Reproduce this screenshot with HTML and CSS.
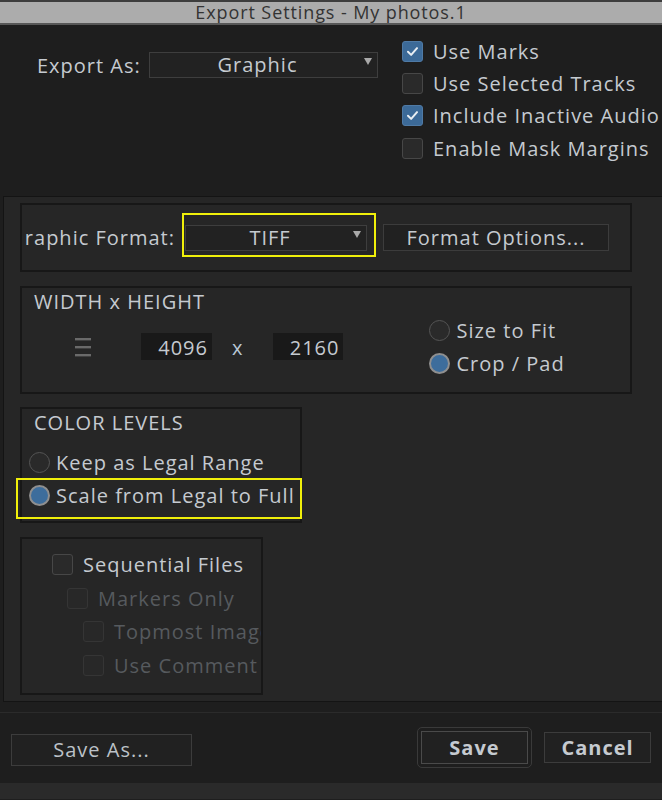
FILE: index.html
```html
<!DOCTYPE html>
<html lang="en">
<head>
<meta charset="utf-8">
<title>Export Settings</title>
<link rel="stylesheet" href="styles.css">
</head>
<body>
<div class="window">
  <header class="titlebar">Export Settings - My photos.1</header>

  <section class="top">
    <div class="export-as">
      <span class="label">Export As:</span>
      <div class="dropdown dd-export"><span>Graphic</span><span class="arrow"></span></div>
    </div>
    <ul class="checks">
      <li><span class="cb checked"><svg viewBox="0 0 21 21"><path d="M5.5 10.8 L9 14.2 L15.5 6.8" /></svg></span>Use Marks</li>
      <li><span class="cb"></span>Use Selected Tracks</li>
      <li><span class="cb checked"><svg viewBox="0 0 21 21"><path d="M5.5 10.8 L9 14.2 L15.5 6.8" /></svg></span>Include Inactive Audio</li>
      <li><span class="cb"></span>Enable Mask Margins</li>
    </ul>
  </section>

  <section class="panel">
    <div class="box format-box">
      <div class="format-label"><span>Graphic Format:</span></div>
      <div class="dropdown dd-format"><span>TIFF</span><span class="arrow"></span></div>
      <div class="btn btn-options">Format Options...</div>
      <div class="highlight hl-format"></div>
    </div>

    <div class="box size-box">
      <div class="box-title">WIDTH x HEIGHT</div>
      <div class="size-row">
        <div class="dims">
          <svg class="link-icon" viewBox="0 0 16 27"><rect x="0" y="5" width="16" height="2.4"/><rect x="0" y="13" width="16" height="2.4"/><rect x="0" y="21" width="16" height="2.4"/></svg>
          <span class="field field-w">4096</span>
          <span class="times">x</span>
          <span class="field field-h">2160</span>
        </div>
        <div class="radios size-radios">
          <div class="radio-row"><span class="radio"></span>Size to Fit</div>
          <div class="radio-row"><span class="radio on"></span>Crop / Pad</div>
        </div>
      </div>
    </div>

    <div class="box levels-box">
      <div class="box-title">COLOR LEVELS</div>
      <div class="radios levels-radios">
        <div class="radio-row"><span class="radio"></span>Keep as Legal Range</div>
        <div class="radio-row"><span class="radio on"></span>Scale from Legal to Full</div>
      </div>
      <div class="highlight hl-levels"></div>
    </div>

    <div class="box seq-box">
      <div class="seq-row lvl0"><span class="cb"></span>Sequential Files</div>
      <div class="seq-row lvl1 disabled"><span class="cb"></span>Markers Only</div>
      <div class="seq-row lvl2 disabled"><span class="cb"></span>Topmost Image</div>
      <div class="seq-row lvl2 disabled"><span class="cb"></span>Use Comment</div>
    </div>
  </section>

  <footer class="footer">
    <div class="btn btn-saveas">Save As...</div>
    <div class="default-ring"><div class="btn btn-save">Save</div></div>
    <div class="btn btn-cancel">Cancel</div>
  </footer>
  <div class="statusbar"></div>
</div>
</body>
</html>
```
FILE: styles.css
```css
html, body {
  margin: 0;
  padding: 0;
  background: #1e1e1e;
}

body {
  font-family: "Open Sans", "DejaVu Sans", sans-serif;
  color: #c5cad0;
  font-size: 20px;
  letter-spacing: 1px;
}

.window {
  width: 662px;
  height: 800px;
  overflow: hidden;
  display: flex;
  flex-direction: column;
}

/* title bar */
.titlebar {
  height: 21px;
  border-top: 2px solid #3d3d3d;
  border-bottom: 2px solid #575757;
  background: #acacac;
  color: #333333;
  font-size: 18px;
  font-weight: 500;
  line-height: 21px;
  text-align: center;
  white-space: nowrap;
  letter-spacing: 0.9px;
}

/* top options */
.top {
  height: 171px;
  display: flex;
  padding-left: 37px;
  box-sizing: border-box;
  flex-shrink: 0;
}

.export-as {
  display: flex;
  align-items: center;
  gap: 10px;
  margin-top: 27px;
  height: 26px;
}

.label {
  width: 102px;
  white-space: nowrap;
}

.dropdown {
  position: relative;
  height: 26px;
  box-sizing: border-box;
  border: 1px solid #3e3e3e;
  background: #222222;
  display: flex;
  align-items: center;
  justify-content: center;
  padding-right: 12px;
  line-height: 1;
  white-space: nowrap;
}

.dropdown .arrow {
  position: absolute;
  right: 5px;
  top: 5px;
  width: 0;
  height: 0;
  border-left: 4px solid transparent;
  border-right: 4px solid transparent;
  border-top: 7px solid #a9a9a9;
}

.dd-export {
  width: 229px;
}

.checks {
  list-style: none;
  margin: 10px 0 0 24px;
  padding: 0;
}

.checks li {
  display: flex;
  align-items: center;
  gap: 10px;
  height: 32.3px;
  white-space: nowrap;
}

/* checkboxes */
.cb {
  flex: 0 0 auto;
  width: 21px;
  height: 21px;
  box-sizing: border-box;
  border: 1px solid #474747;
  border-radius: 3px;
  background: #2a2a2a;
  display: inline-flex;
}

.cb.checked {
  background: #3c6a98;
  border-color: #4f7aa5;
}

.cb svg {
  width: 19px;
  height: 19px;
}

.cb svg path {
  fill: none;
  stroke: #e9eef3;
  stroke-width: 2.2;
  stroke-linecap: round;
  stroke-linejoin: round;
}

/* settings panel */
.panel {
  margin-left: 3px;
  border: 1px solid #141414;
  border-right: 0;
  background: #262626;
  padding: 6px 0 6px 16px;
  display: flex;
  flex-direction: column;
  align-items: flex-start;
  flex-shrink: 0;
}

.box {
  box-sizing: border-box;
  border: 2px solid #171717;
  background: #262626;
  position: relative;
}

.box-title {
  font-size: 20px;
  line-height: 24px;
  padding-top: 2px;
  white-space: nowrap;
}

.highlight {
  position: absolute;
  box-sizing: border-box;
  border: 2px solid #f0ef0a;
  pointer-events: none;
}

/* graphic format */
.format-box {
  width: 612px;
  height: 69px;
  display: flex;
  align-items: center;
  padding-left: 3px;
}

.format-label {
  width: 150px;
  overflow: hidden;
  display: flex;
  justify-content: flex-end;
  white-space: nowrap;
  margin-right: 10px;
}

.dd-format {
  width: 182px;
  margin-right: 16px;
}

.btn {
  box-sizing: border-box;
  border: 1px solid #3c3c3c;
  background: #212121;
  display: flex;
  align-items: center;
  justify-content: center;
  white-space: nowrap;
  line-height: 1;
}

.btn-options {
  width: 226px;
  height: 27px;
}

.hl-format {
  left: 160px;
  top: 8px;
  width: 194px;
  height: 44px;
}

/* width x height */
.size-box {
  margin-top: 14px;
  width: 612px;
  height: 108px;
  padding-left: 12px;
}

.size-row {
  display: flex;
  align-items: flex-start;
}

.dims {
  display: flex;
  align-items: center;
  margin-top: 17px;
  margin-left: 41px;
}

.link-icon {
  width: 16px;
  height: 27px;
  fill: #6a6a6a;
}

.field {
  height: 27px;
  box-sizing: border-box;
  background: #191919;
  display: flex;
  align-items: center;
  justify-content: flex-end;
  padding: 4px 4px 0 0;
  line-height: 1;
}

.field-w {
  width: 71px;
  margin-left: 50px;
}

.field-h {
  width: 70px;
}

.times {
  margin: 3px 30px 0 20px;
  color: #b9c6d4;
}

.radios {
  display: flex;
  flex-direction: column;
}

.radio-row {
  display: flex;
  align-items: center;
  gap: 6px;
  height: 33px;
  white-space: nowrap;
}

.radio {
  flex: 0 0 auto;
  width: 21px;
  height: 21px;
  box-sizing: border-box;
  border-radius: 50%;
  border: 1px solid #555555;
  background: #2a2a2a;
}

.radio.on {
  border: 2px solid #8f8f8f;
  background: #3d6d9c;
}

.size-radios {
  margin-left: 86px;
}

/* color levels */
.levels-box {
  margin-top: 13px;
  width: 282px;
  height: 116px;
  padding-left: 12px;
}

.levels-radios {
  margin-left: -5px;
  margin-top: 11px;
}

.hl-levels {
  left: -6px;
  top: 69px;
  width: 286px;
  height: 41px;
}

/* sequential files */
.seq-box {
  margin-top: 14px;
  width: 243px;
  height: 158px;
  overflow: hidden;
  padding-top: 9px;
}

.seq-row {
  display: flex;
  align-items: center;
  gap: 10px;
  height: 33.5px;
  white-space: nowrap;
}

.lvl0 { margin-left: 30px; }
.lvl1 { margin-left: 45px; }
.lvl2 { margin-left: 61px; }

.seq-row.disabled {
  color: #565a5e;
}

.seq-row.disabled .cb {
  border-color: #353535;
  background: #282828;
}

/* footer buttons */
.footer {
  margin-top: 10px;
  border-top: 1px solid #2b2b2b;
  height: 71px;
  box-sizing: border-box;
  display: flex;
  align-items: flex-start;
  padding: 0 11px;
  flex-shrink: 0;
}

.btn-saveas {
  width: 181px;
  height: 32px;
  margin-top: 21px;
  color: #bcc2c8;
}

.default-ring {
  margin-top: 14px;
  margin-left: auto;
  width: 115px;
  height: 41px;
  box-sizing: border-box;
  border: 1px solid #3a3a3a;
  border-radius: 5px;
  padding: 3px;
}

.btn-save {
  width: 100%;
  height: 100%;
  border-color: #4a4a4a;
  font-weight: 700;
}

.btn-cancel {
  margin-top: 19px;
  margin-left: 12px;
  width: 107px;
  height: 31px;
  font-weight: 700;
}

.statusbar {
  height: 16px;
  background: #2a2a2a;
  flex-shrink: 0;
}
```
